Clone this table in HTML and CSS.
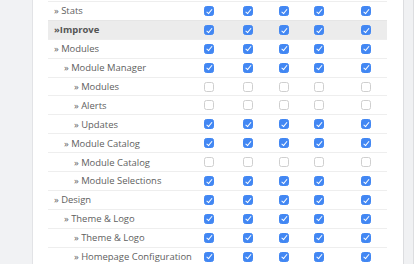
FILE: index.html
```html
<!DOCTYPE html>
<html>
<head>
<meta charset="utf-8">
<link rel="stylesheet" href="styles.css">
</head>
<body>
<div class="page">
  <div class="sidebar"></div>
  <div class="main">
    <div class="table">
      <div class="row"><div class="name l1">» Stats</div><span class="cb on"></span><span class="cb on"></span><span class="cb on"></span><span class="cb on"></span><span class="cb on"></span></div>
      <div class="row tab"><div class="name l1"><b>»Improve</b></div><span class="cb on"></span><span class="cb on"></span><span class="cb on"></span><span class="cb on"></span><span class="cb on"></span></div>
      <div class="row"><div class="name l1">» Modules</div><span class="cb on"></span><span class="cb on"></span><span class="cb on"></span><span class="cb on"></span><span class="cb on"></span></div>
      <div class="row"><div class="name l2">» Module Manager</div><span class="cb on"></span><span class="cb on"></span><span class="cb on"></span><span class="cb on"></span><span class="cb on"></span></div>
      <div class="row"><div class="name l3">» Modules</div><span class="cb"></span><span class="cb"></span><span class="cb"></span><span class="cb"></span><span class="cb"></span></div>
      <div class="row"><div class="name l3">» Alerts</div><span class="cb"></span><span class="cb"></span><span class="cb"></span><span class="cb"></span><span class="cb"></span></div>
      <div class="row"><div class="name l3">» Updates</div><span class="cb on"></span><span class="cb on"></span><span class="cb on"></span><span class="cb on"></span><span class="cb on"></span></div>
      <div class="row"><div class="name l2">» Module Catalog</div><span class="cb on"></span><span class="cb on"></span><span class="cb on"></span><span class="cb on"></span><span class="cb on"></span></div>
      <div class="row"><div class="name l3">» Module Catalog</div><span class="cb"></span><span class="cb"></span><span class="cb"></span><span class="cb"></span><span class="cb"></span></div>
      <div class="row"><div class="name l3">» Module Selections</div><span class="cb on"></span><span class="cb on"></span><span class="cb on"></span><span class="cb on"></span><span class="cb on"></span></div>
      <div class="row"><div class="name l1">» Design</div><span class="cb on"></span><span class="cb on"></span><span class="cb on"></span><span class="cb on"></span><span class="cb on"></span></div>
      <div class="row"><div class="name l2">» Theme &amp; Logo</div><span class="cb on"></span><span class="cb on"></span><span class="cb on"></span><span class="cb on"></span><span class="cb on"></span></div>
      <div class="row"><div class="name l3">» Theme &amp; Logo</div><span class="cb on"></span><span class="cb on"></span><span class="cb on"></span><span class="cb on"></span><span class="cb on"></span></div>
      <div class="row"><div class="name l3">» Homepage Configuration</div><span class="cb on"></span><span class="cb on"></span><span class="cb on"></span><span class="cb on"></span><span class="cb on"></span></div>
    </div>
  </div>
  <div class="scroll"></div>
</div>
</body>
</html>
```
FILE: styles.css
```css
html, body {
  margin: 0;
  padding: 0;
  background: #ffffff;
  overflow: hidden;
}
.page {
  display: flex;
  width: 415px;
  height: 264px;
  overflow: hidden;
  font-family: "Open Sans", "DejaVu Sans", sans-serif;
  font-size: 9.45px;
  color: #606060;
}
.sidebar {
  width: 32px;
  flex: none;
  background: #f1f2f4;
  border-right: 1px solid #e2e3e6;
}
.main {
  width: 370px;
  flex: none;
  padding: 1px 16px 0 15px;
  box-sizing: border-box;
  background: #fff;
}
.table {
  width: 339px;
}
.row {
  display: grid;
  grid-template-columns: 156px 39px 36px 35px 47px 26px;
  align-items: center;
  height: 18.9px;
  box-sizing: border-box;
  border-top: 1px solid #eeeeee;
}
.row.tab {
  background: #ececec;
  border-top-color: #e6e6e6;
}
.row.tab b {
  font-weight: 700;
  color: #555;
}
.name {
  white-space: nowrap;
  line-height: 17px;
}
.l1 { padding-left: 6px; }
.l2 { padding-left: 16px; }
.l3 { padding-left: 26px; }
.cb {
  position: relative;
  width: 10px;
  height: 10px;
  box-sizing: border-box;
  border: 1px solid #cfcfcf;
  border-radius: 2.5px;
  background: #fff;
  justify-self: start;
}
.cb.on {
  background: #4287f3;
  border-color: #4287f3;
}
.cb.on::after {
  content: "";
  position: absolute;
  left: 2.7px;
  top: 0.7px;
  width: 2.2px;
  height: 4.6px;
  border-right: 1.2px solid #fff;
  border-bottom: 1.2px solid #fff;
  transform: rotate(40deg);
}
.scroll {
  width: 9px;
  flex: none;
  background: #f0f1f3;
  border-left: 1px solid #dcdde0;
  border-right: 1px solid #dcdde0;
}
```
